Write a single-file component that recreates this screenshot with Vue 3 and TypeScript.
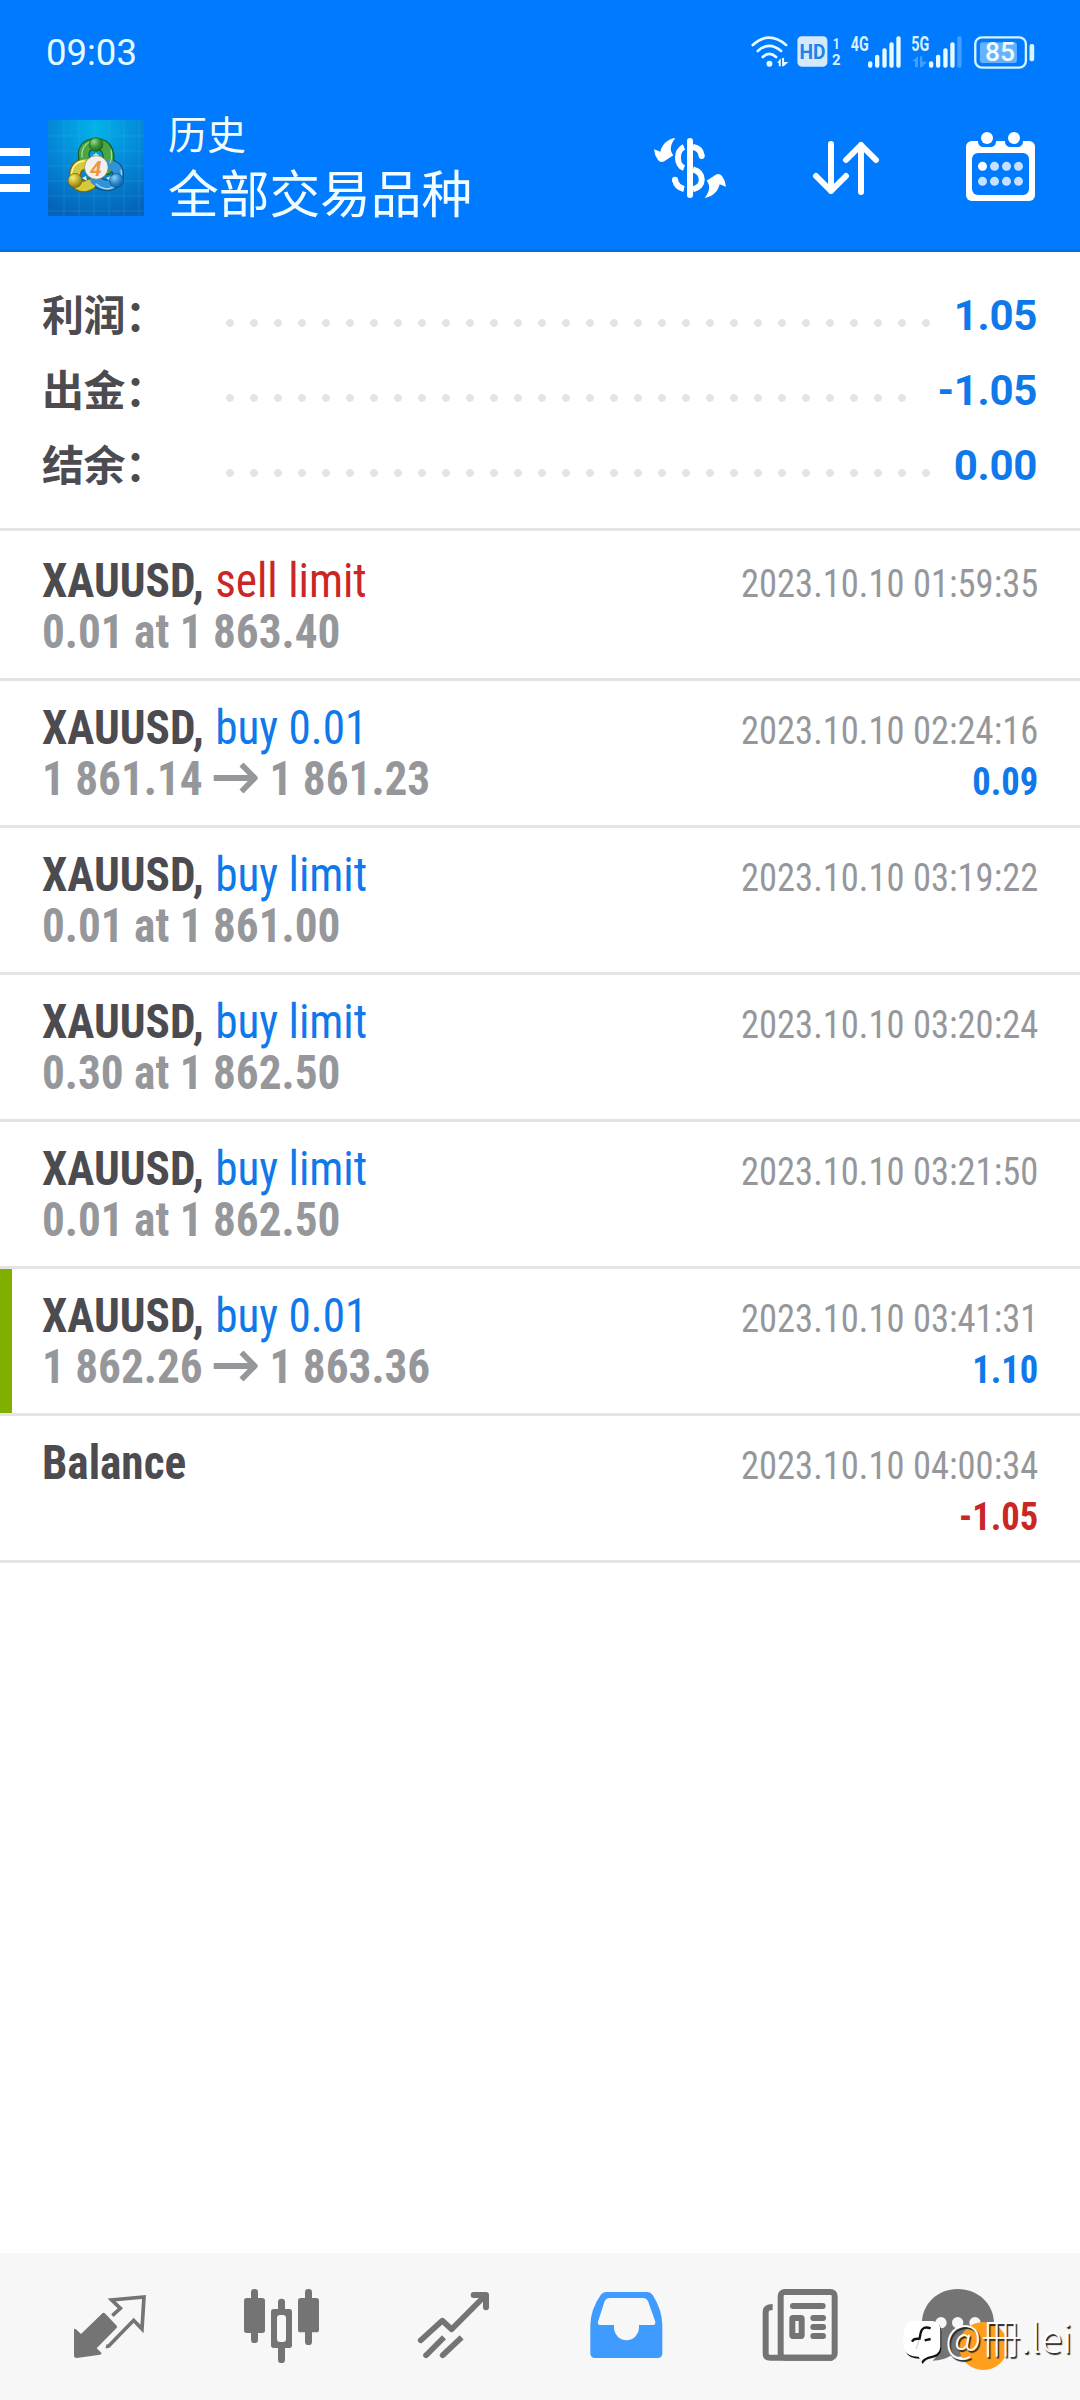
<script setup lang="ts">
interface Summary {
  label: string
  value: string
  dots: number
}

interface Deal {
  symbol: string
  action?: string
  side?: 'buy' | 'sell'
  detail?: string
  from?: string
  to?: string
  time: string
  profit?: string
  marked?: boolean
}

const summary: Summary[] = [
  { label: '利润：', value: '1.05', dots: 30 },
  { label: '出金：', value: '-1.05', dots: 29 },
  { label: '结余：', value: '0.00', dots: 30 },
]

const deals: Deal[] = [
  { symbol: 'XAUUSD,', action: 'sell limit', side: 'sell', detail: '0.01 at 1 863.40', time: '2023.10.10 01:59:35' },
  { symbol: 'XAUUSD,', action: 'buy 0.01', side: 'buy', from: '1 861.14', to: '1 861.23', time: '2023.10.10 02:24:16', profit: '0.09' },
  { symbol: 'XAUUSD,', action: 'buy limit', side: 'buy', detail: '0.01 at 1 861.00', time: '2023.10.10 03:19:22' },
  { symbol: 'XAUUSD,', action: 'buy limit', side: 'buy', detail: '0.30 at 1 862.50', time: '2023.10.10 03:20:24' },
  { symbol: 'XAUUSD,', action: 'buy limit', side: 'buy', detail: '0.01 at 1 862.50', time: '2023.10.10 03:21:50' },
  { symbol: 'XAUUSD,', action: 'buy 0.01', side: 'buy', from: '1 862.26', to: '1 863.36', time: '2023.10.10 03:41:31', profit: '1.10', marked: true },
  { symbol: 'Balance', time: '2023.10.10 04:00:34', profit: '-1.05' },
]

const gridLines = [12, 27, 42, 57, 72, 87]
</script>

<template>
  <div class="screen">
    <header class="header">
      <div class="status">
        <span class="clock">09:03</span>
        <svg class="status-icons" viewBox="380 90 870 130">
          <g fill="none" stroke="#e6fbff" stroke-width="8" stroke-linecap="round">
            <path d="M397 135Q446 91 497 135" />
            <path d="M412 153Q446 122 482 153" />
            <path d="M427 171Q446 153 467 171" />
          </g>
          <circle cx="447" cy="191" r="9" fill="#e6fbff" />
          <path d="M470 188L481 175V199H475V188ZM485 174H491V186H504L490 199H485Z" fill="#e6fbff" />
          <rect x="531" y="109" width="90" height="91" rx="13" fill="#d6e9fb" />
          <text x="537" y="177" textLength="78" lengthAdjust="spacingAndGlyphs" font-size="62" font-weight="700" fill="#1d82ec">HD</text>
          <g fill="#d6f2ff" font-weight="700">
            <text x="637" y="147" font-size="45" textLength="21" lengthAdjust="spacingAndGlyphs">1</text>
            <text x="635" y="196" font-size="45">2</text>
            <text x="691" y="152" font-size="58" textLength="54" lengthAdjust="spacingAndGlyphs">4G</text>
            <text x="873" y="152" font-size="58" textLength="54" lengthAdjust="spacingAndGlyphs">5G</text>
          </g>
          <g fill="#e6fbff">
            <rect x="743" y="184" width="13" height="19" rx="6" />
            <rect x="764" y="164" width="13" height="39" rx="6" />
            <rect x="786" y="145" width="13" height="58" rx="6" />
            <rect x="807" y="127" width="13" height="76" rx="6" />
            <rect x="828" y="109" width="13" height="94" rx="6" />
            <rect x="926" y="184" width="13" height="19" rx="6" />
            <rect x="947" y="164" width="13" height="39" rx="6" />
            <rect x="969" y="145" width="13" height="58" rx="6" />
            <rect x="990" y="127" width="13" height="76" rx="6" />
          </g>
          <rect x="1011" y="109" width="13" height="94" rx="6" fill="#409fff" />
          <path d="M875 184L893 169V202H884V184ZM899 169H906V185H920L905 202H899Z" fill="#409fff" />
          <rect x="1065" y="112" width="152" height="91" rx="20" fill="none" stroke="#d8f4ff" stroke-width="7" />
          <rect x="1079" y="127" width="111" height="62" rx="8" fill="#66b2ff" />
          <text x="1094" y="184" font-size="76" font-weight="500" textLength="90" lengthAdjust="spacingAndGlyphs" fill="#f0fdff">85</text>
          <rect x="1228" y="132" width="14" height="52" rx="6" fill="#d8f4ff" />
        </svg>
      </div>

      <div class="toolbar">
        <div class="menu"><i></i><i></i><i></i></div>
        <svg class="logo" viewBox="0 0 96 96">
          <defs>
            <radialGradient id="sky" cx=".5" cy=".08" r=".95">
              <stop offset="0" stop-color="#03b4e9" />
              <stop offset=".5" stop-color="#0489d8" />
              <stop offset="1" stop-color="#0563b8" />
            </radialGradient>
            <radialGradient id="green" cx=".35" cy=".3" r=".8">
              <stop offset="0" stop-color="#9fd68d" />
              <stop offset=".5" stop-color="#3b9637" />
              <stop offset="1" stop-color="#14651e" />
            </radialGradient>
            <radialGradient id="gold" cx=".35" cy=".3" r=".8">
              <stop offset="0" stop-color="#f5ec83" />
              <stop offset=".5" stop-color="#c3af2a" />
              <stop offset="1" stop-color="#7c6f14" />
            </radialGradient>
            <radialGradient id="azure" cx=".35" cy=".3" r=".8">
              <stop offset="0" stop-color="#8ed2f7" />
              <stop offset=".5" stop-color="#2b8bd0" />
              <stop offset="1" stop-color="#0b5599" />
            </radialGradient>
          </defs>
          <rect width="96" height="96" fill="url(#sky)" />
          <g stroke="#5cc4f2" stroke-opacity=".22" stroke-width=".8">
            <path v-for="p in gridLines" :key="p" :d="`M${p + 4} 0V96M0 ${p + 4}H96`" />
          </g>
          <g fill="none" stroke-linecap="round">
            <path d="M37 43C33 29 39 24 48 24C59 24 63 33 59 49" stroke="#175f22" stroke-width="12" />
            <path d="M43 64C32 70 26 64 27 54C28 47 32 44 39 44" stroke="#6f6812" stroke-width="12" />
            <path d="M59 45C68 45 71 50 70 57C68 67 56 68 47 60" stroke="#0b538c" stroke-width="12" />
            <path d="M37 41C33 29 39 24 48 24C59 24 63 33 59 49" stroke="#4aa645" stroke-width="9.500" />
            <path d="M43 64C32 70 26 64 27 54C28 47 32 44 39 44" stroke="#d8c93a" stroke-width="9.500" />
            <path d="M59 45C68 45 71 50 70 57C68 67 56 68 47 60" stroke="#3292d8" stroke-width="9.500" />
            <path d="M34 37C33 26 40 20.500 50 20.500M63 30C64 34 64 38 62 43" stroke="#a6dc98" stroke-width="1.200" />
            <path d="M23.500 56C23.500 47 28 42 36 41" stroke="#fbf7a4" stroke-width="1.400" />
            <path d="M73 50C74 56 73 62 69 65M48 64C54 69 60 70 65 67" stroke="#a6ddfa" stroke-width="1.200" />
          </g>
          <path d="M42 38L48 33L54 38Z" fill="#d8efd0" />
          <path d="M34 58L38 56L39 61Z" fill="#f3efb8" />
          <path d="M58 58L63 56L62 61Z" fill="#cfeafa" />
          <circle cx="48" cy="24.500" r="6.800" fill="url(#green)" stroke="#1d6424" stroke-width=".8" />
          <circle cx="27" cy="60.500" r="7" fill="url(#gold)" stroke="#706515" stroke-width=".8" />
          <circle cx="68.500" cy="60.500" r="7" fill="url(#azure)" stroke="#0d5590" stroke-width=".8" />
          <circle cx="48.300" cy="47.500" r="11.800" fill="#f3f1ee" stroke="#8d7d4a" stroke-width=".7" />
          <text x="47.800" y="55.500" text-anchor="middle" font-size="21" font-style="italic" font-weight="700" fill="#f0963c">4</text>
        </svg>
        <div class="titles">
          <div class="title">历史</div>
          <div class="subtitle">全部交易品种</div>
        </div>
        <svg class="tool dollar" viewBox="99 390 222 228">
          <g fill="none" stroke="#fff" stroke-width="18">
            <path d="M192 441C168 450 168 496 192 504" />
            <path d="M219 441C233 443 243 451 245 468" />
            <path d="M245 467V468" stroke-linecap="round" />
            <path d="M219 508C254 518 254 560 219 568" />
            <path d="M192 567C178 564 168 555 165 539" />
            <path d="M165 540V539" stroke-linecap="round" />
            <path d="M210 423V585" stroke-linecap="round" />
          </g>
          <g fill="#fff">
            <path d="M166 414C152 432 147 450 160 466L134 483Q122 490 114 480Q103 465 102 448L121 455C126 434 142 417 166 414Z" />
            <path transform="rotate(180 210 504)" d="M166 414C152 432 147 450 160 466L134 483Q122 490 114 480Q103 465 102 448L121 455C126 434 142 417 166 414Z" />
          </g>
        </svg>
        <svg class="tool sort" viewBox="576 390 204 228">
          <path d="M633 432V573M588 528L633 573L678 528M723 576V435M678 480L723 435L768 480" fill="none" stroke="#fff" stroke-width="18" stroke-linecap="round" stroke-linejoin="round" />
        </svg>
        <svg class="tool calendar" viewBox="1035 390 213 228">
          <rect x="1038" y="423" width="207" height="180" rx="17" fill="#fff" />
          <g fill="#007aff">
            <rect x="1056" y="459" width="171" height="126" rx="18" />
            <rect x="1074" y="400" width="54" height="41" rx="16" />
            <rect x="1155" y="400" width="54" height="41" rx="16" />
          </g>
          <circle cx="1101" cy="414" r="18" fill="#fff" />
          <circle cx="1182" cy="414" r="18" fill="#fff" />
          <g fill="#c4e1ff">
            <circle v-for="n in 7" :key="n" :cx="1087.5 + (n % 4) * 36" :cy="n > 3 ? 544 : 499" r="13.5" />
          </g>
          <circle cx="1087.5" cy="499" r="13.5" fill="#fff" />
        </svg>
      </div>
    </header>

    <section class="summary">
      <div v-for="item in summary" :key="item.label" class="sum-row">
        <span class="sum-label">{{ item.label }}</span>
        <span class="leader" :style="{ width: item.dots * 24 + 'px' }"></span>
        <span class="sum-value">{{ item.value }}</span>
      </div>
    </section>

    <main class="deals">
      <article v-for="deal in deals" :key="deal.time" class="deal" :class="{ marked: deal.marked }">
        <div class="left">
          <div class="line">
            <b class="symbol">{{ deal.symbol }}</b>
            <span v-if="deal.action" class="action" :class="deal.side">{{ deal.action }}</span>
          </div>
          <div v-if="deal.detail" class="line prices"><span>{{ deal.detail }}</span></div>
          <div v-else-if="deal.from" class="line prices">
            <span class="from">{{ deal.from }}</span>
            <svg class="arrow" viewBox="0 0 45 30" preserveAspectRatio="none"><path d="M0 15H42M28.500 1.500L42 15L28.500 28.500" fill="none" stroke="#96979b" stroke-width="5.800" /></svg>
            <span>{{ deal.to }}</span>
          </div>
        </div>
        <div class="right">
          <span class="time">{{ deal.time }}</span>
          <b v-if="deal.profit" class="profit" :class="{ loss: deal.profit.startsWith('-') }">{{ deal.profit }}</b>
        </div>
      </article>
    </main>

    <nav class="tabs">
      <svg viewBox="-48 39 516 441">
        <path d="M188 219Q192 217 196 221L230 257Q233 261 229 265L170 325L184 338Q186 342 180 344L110 354Q102 354 102 346V268Q104 264 108 268L123 282Z" fill="#747474" />
        <path d="M217 227L241 205L215 180L312 171L306 267L281 241L207 317Q203 320 198 319" fill="none" stroke="#747474" stroke-width="11" />
      </svg>
      <svg viewBox="468 39 516 441">
        <g fill="#747474">
          <rect x="633" y="147" width="21" height="162" rx="10" />
          <rect x="612" y="174" width="63" height="105" rx="8" />
          <rect x="795" y="147" width="21" height="168" rx="10" />
          <rect x="774" y="174" width="63" height="103" rx="8" />
          <rect x="714" y="176" width="21" height="60" rx="10" />
          <rect x="714" y="300" width="21" height="69" rx="10" />
          <rect x="693" y="207" width="63" height="117" rx="8" />
        </g>
        <rect x="711" y="225" width="27" height="81" rx="9" fill="#f7f7f7" />
      </svg>
      <svg viewBox="984 39 516 441">
        <g fill="none" stroke="#747474" stroke-width="17">
          <path d="M1142 301L1207 242L1235 268L1332 170" stroke-linecap="round" stroke-linejoin="round" />
          <path d="M1301 165H1338V202" stroke-linecap="round" stroke-linejoin="round" stroke-width="18" />
          <path d="M1160 344L1212 292M1210 344L1265 292" />
          <path d="M1158 346L1159 345M1208 346L1209 345" stroke-linecap="round" />
        </g>
      </svg>
      <svg viewBox="-60 39 516 441">
        <path d="M138 156H262Q272 156 278 165Q306 208 307 255V340Q307 354 293 354H105Q91 354 91 340V255Q92 208 122 165Q128 156 138 156Z" fill="#409bff" />
        <path d="M148 174H250Q259 174 264 183L286 245Q287 255 278 255H237V262A37 38 0 0 1 162 262V255H122Q112 255 114 245L134 183Q139 174 148 174Z" fill="#f7f7f7" />
      </svg>
      <svg viewBox="456 39 516 441">
        <path d="M638 201Q617 201 617 216V341Q617 353 631 353H818" fill="none" stroke="#747474" stroke-width="18" />
        <rect x="662" y="156" width="162" height="197" rx="12" fill="none" stroke="#747474" stroke-width="18" />
        <path d="M699 198H788M760 234H789M760 261H789M760 288H789" stroke="#747474" stroke-width="18" stroke-linecap="round" />
        <rect x="697" y="234" width="28" height="54" rx="2" fill="none" stroke="#747474" stroke-width="18" stroke-linejoin="round" />
      </svg>
      <svg viewBox="972 39 516 441">
        <path d="M1193 147C1253 147 1302 191 1302 250C1302 308 1256 350 1196 350Q1182 350 1172 347Q1150 361 1118 362Q1134 348 1132 330C1104 314 1086 285 1086 250C1086 191 1134 147 1193 147Z" fill="#747474" />
        <g fill="#f7f7f7">
          <circle cx="1143" cy="248" r="17" />
          <circle cx="1193" cy="248" r="17" />
          <circle cx="1245" cy="248" r="17" />
        </g>
        <ellipse cx="1270" cy="318" rx="73" ry="72" fill="#ff9f1c" />
      </svg>
      <div class="stamp">
        <svg class="stamp-icon" viewBox="36 120 124 138">
          <path d="M66 129H130Q152 133 152 154V208Q150 232 116 236Q102 240 96 252L88 236Q54 236 46 216Q36 180 44 150Q50 132 66 129Z" fill="#111" transform="translate(2 3)" />
          <path d="M66 126H128Q151 130 151 154V205Q149 230 114 233Q100 238 94 248L86 233Q54 234 44 214Q36 180 44 148Q50 128 66 126Z" fill="#fff" />
          <path d="M122 148Q97 139 92 162L88 182M66 188Q72 177 88 180M104 184L122 180" fill="none" stroke="#111" stroke-width="7" />
          <path d="M87 184L79 210" stroke="#ddd" stroke-width="5" />
        </svg>
        <span class="stamp-text">@冊.lei</span>
      </div>
    </nav>
  </div>
</template>

<style>
body {
  background: #fff;
}
</style>

<style scoped>
.screen {
  width: 1080px;
  height: 2400px;
  display: flex;
  flex-direction: column;
  overflow: hidden;
  background: #fff;
  font-family: Roboto, "Noto Sans CJK SC", sans-serif;
}

.header {
  height: 252px;
  flex: none;
  box-sizing: border-box;
  border-bottom: 3px solid #0570dc;
  background: #007aff;
}

.status {
  height: 100px;
  display: flex;
  align-items: flex-start;
  justify-content: space-between;
  padding: 30px 43.3px 0 46px;
  box-sizing: border-box;
}

.clock {
  margin-top: 1px;
  font-size: 36.5px;
  font-weight: 450;
  line-height: 44px;
  color: #e6fbff;
}

.status-icons {
  width: 290px;
  height: 43.3px;
}

.toolbar {
  height: 149px;
  display: flex;
}

.menu {
  width: 30px;
  margin: 48px 18px 0 0;
  display: flex;
  flex-direction: column;
  gap: 10px;
}

.menu i {
  height: 8px;
  background: #fff;
}

.logo {
  width: 96px;
  height: 96px;
  margin-top: 20px;
}

.titles {
  width: 485px;
  margin-left: 24px;
  color: #f2fdff;
  font-family: "Noto Sans CJK SC", sans-serif;
  white-space: nowrap;
}

.title {
  margin-top: 4px;
  font-size: 39px;
  line-height: 57px;
}

.subtitle {
  font-size: 50.7px;
  line-height: 61px;
}

.tool {
  height: 76px;
  margin-top: 30px;
}

.dollar {
  width: 74px;
}

.sort {
  width: 68px;
  margin-left: 85px;
}

.calendar {
  width: 71px;
  margin-left: 85px;
}

.summary {
  height: 276px;
  flex: none;
  box-sizing: border-box;
  padding: 27px 43px 0 42px;
}

.sum-row {
  height: 75px;
  display: flex;
  align-items: center;
}

.sum-label {
  width: 176px;
  margin-top: -9px;
  font: 700 42px/75px "Noto Sans CJK SC", sans-serif;
  letter-spacing: -0.5px;
  color: #4c4b50;
}

.leader {
  height: 24px;
  margin-top: 13px;
  background: radial-gradient(circle at center, #e4e4e4 3.5px, transparent 4.3px) 0 0 / 24px 24px repeat-x;
}

.sum-value {
  margin-top: -3px;
  margin-left: auto;
  font-weight: 700;
  font-size: 42px;
  line-height: 75px;
  letter-spacing: -0.3px;
  color: #0f78ea;
}

.deals {
  flex: 1;
  border-top: 3px solid #e4e4e4;
}

.deal {
  height: 147px;
  display: flex;
  justify-content: space-between;
  box-sizing: border-box;
  padding: 21px 42px 0;
  border-bottom: 3px solid #e4e4e4;
  font-stretch: 75%;
}

.deal:first-child {
  height: 150px;
  padding-top: 24px;
}

.deal.marked {
  box-shadow: inset 12px 0 0 #7fb000;
}

.left {
  transform: scaleX(0.942);
  transform-origin: left;
}

.line {
  height: 51px;
  display: flex;
  font-size: 48px;
  line-height: 51px;
  white-space: nowrap;
}

.symbol {
  margin-right: 12px;
  color: #4c4b50;
}

.buy {
  color: #0f78ea;
}

.sell {
  color: #cb2626;
}

.prices {
  font-weight: 700;
  color: #96979b;
}

.arrow {
  width: 47px;
  height: 30px;
  margin: 10px 13px 0 11px;
}

.right {
  display: flex;
  flex-direction: column;
  align-items: flex-end;
  padding-top: 4px;
  font-size: 39px;
  line-height: 51px;
  color: #96979b;
  transform: scaleX(0.937);
  transform-origin: right;
}

.profit {
  color: #0f78ea;
}

.profit.loss {
  color: #cb2626;
}

.tabs {
  position: relative;
  height: 147px;
  flex: none;
  display: flex;
  padding-left: 24px;
  background: #f7f7f7;
}

.tabs > svg {
  width: 172px;
  height: 147px;
}

.stamp {
  position: absolute;
  left: 902px;
  top: 57px;
  display: flex;
}

.stamp-icon {
  width: 41.300px;
  height: 46px;
  margin-top: 9px;
}

.stamp-text {
  margin-left: 2px;
  font: 300 39.500px/52px "Noto Sans CJK SC", sans-serif;
  color: #fff;
  text-shadow: 1.500px 1.500px 1px #222;
}
</style>
